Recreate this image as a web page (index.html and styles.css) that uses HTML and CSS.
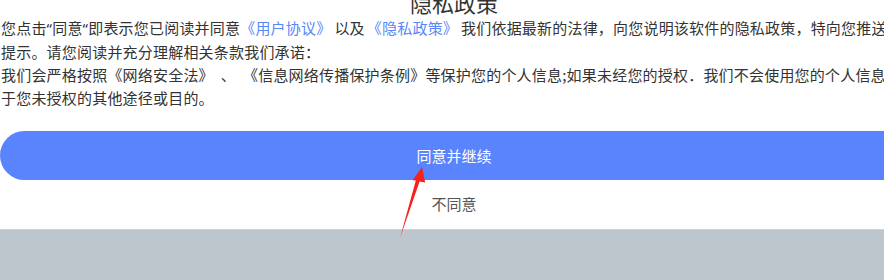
FILE: index.html
```html
<!DOCTYPE html>
<html lang="zh-CN">
<head>
<meta charset="utf-8">
<title>隐私政策</title>
<link rel="stylesheet" href="styles.css">
</head>
<body>
<div class="page">
  <div class="dialog">
    <h1 class="title">隐私政策</h1>
    <p class="content">您点击<span class="q">“</span>同意<span class="q">“</span>即表示您已阅读并同意<a class="link">《用户协议》</a>以及<a class="link link-second">《隐私政策》</a>我们依据最新的法律，向您说明该软件的隐私政策，特向您推送<br>提示。请您阅读并充分理解相关条款我们承诺：<br>我们会严格按照《网络安全法》<span class="sep">、</span>《信息网络传播保护条例》等保护您的个人信息;如果未经您的授权．我们不会使用您的个人信息<br>于您未授权的其他途径或目的。</p>
    <div class="actions">
      <button class="btn-agree">同意并继续</button>
      <button class="btn-disagree">不同意</button>
    </div>
  </div>
  <div class="backdrop"></div>
  <svg class="arrow" width="884" height="280" viewBox="0 0 884 280" aria-hidden="true">
    <polygon points="422,167 425.2,182.6 419.6,181.4 400,238 415.8,180.4 412.6,180.2" fill="#f5231c"/>
  </svg>
</div>
</body>
</html>
```

FILE: styles.css
```css
html, body {
  margin: 0;
  padding: 0;
  background: #ffffff;
  overflow: hidden;
}

.page {
  position: relative;
  width: 884px;
  height: 280px;
  overflow: hidden;
  font-family: "Noto Sans CJK SC", "Noto Sans", sans-serif;
  text-spacing-trim: space-all;
}

.dialog {
  width: 908px;
  margin-top: -12px;
  background: #ffffff;
}

.title {
  margin: 0;
  font-size: 22px;
  line-height: 28px;
  font-weight: 400;
  color: #333333;
  text-align: center;
}

.content {
  margin: 0;
  padding-left: 1px;
  font-size: 15px;
  line-height: 23px;
  letter-spacing: 0.2px;
  color: #333333;
  white-space: nowrap;
  text-spacing-trim: space-all;
}

.q {
  font-family: "Noto Sans", "DejaVu Sans", sans-serif;
}

.link {
  color: #5a87f6;
  text-decoration: none;
  margin-right: 3px;
}

.link-second {
  margin-left: 2px;
}

.sep {
  margin: 0 7px;
}

.actions {
  display: flex;
  flex-direction: column;
  margin-top: 22px;
}

.btn-agree {
  height: 49px;
  border: none;
  border-radius: 25px;
  background: #5a84fe;
  color: #ffffff;
  font-family: inherit;
  font-size: 15px;
  padding: 0;
}

.btn-disagree {
  height: 49px;
  border: none;
  background: transparent;
  color: #555555;
  font-family: inherit;
  font-size: 15px;
  padding: 0 0 3px 0;
}

.backdrop {
  height: 60px;
  background: #bec6cd;
  border-top: 1px solid #cdd3d8;
}

.arrow {
  position: absolute;
  left: 0;
  top: 0;
}
```
